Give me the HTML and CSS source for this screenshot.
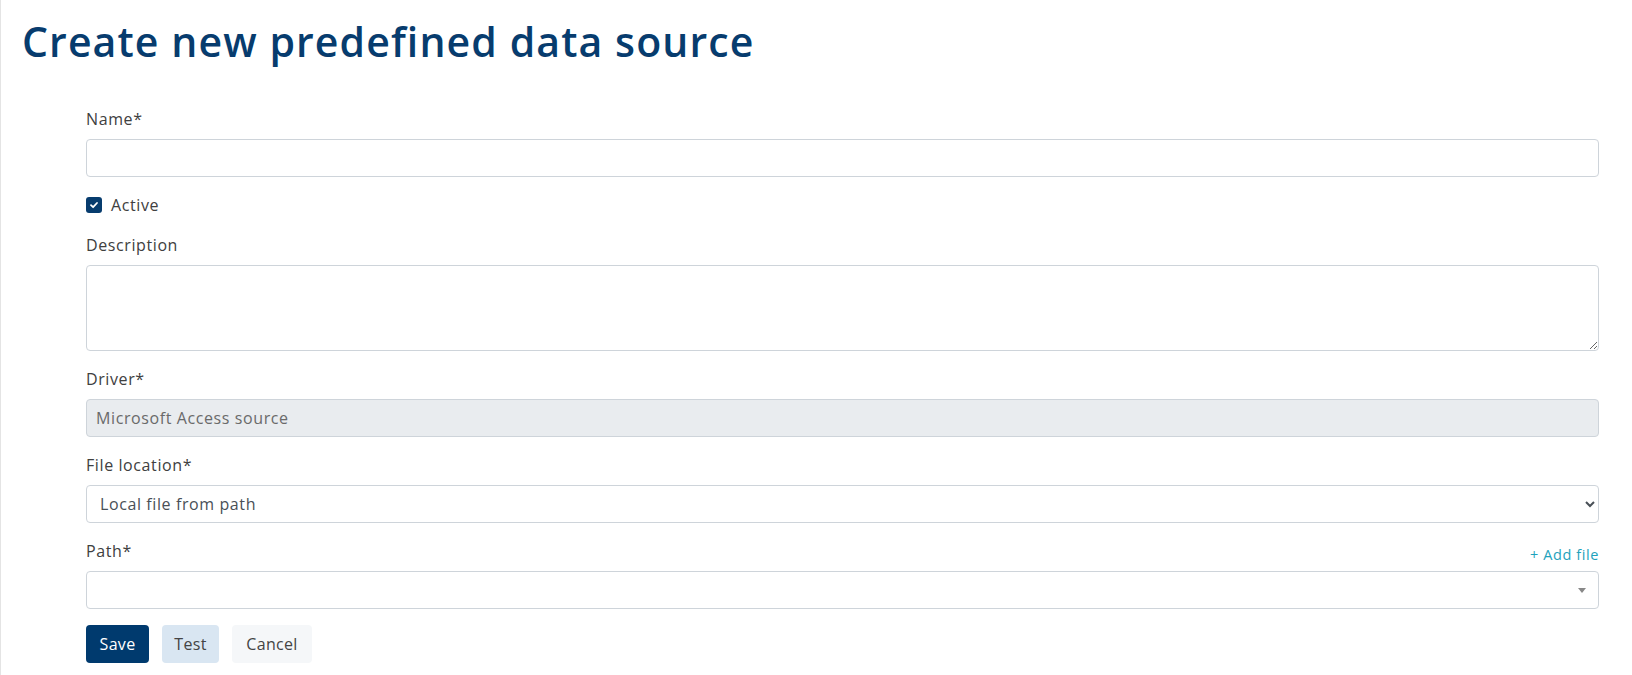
FILE: index.html
```html
<!DOCTYPE html>
<html lang="en">
<head>
<meta charset="utf-8">
<title>Create new predefined data source</title>
<link rel="stylesheet" href="styles.css">
</head>
<body>
<div class="page">
  <h1 class="title">Create new predefined data source</h1>
  <form class="form">
    <div class="group">
      <label class="label">Name*</label>
      <input class="control" type="text">
    </div>
    <div class="check-row">
      <span class="checkbox">
        <svg width="10" height="10" viewBox="0 0 10 10"><path d="M2 5.2 L4.1 7.2 L8 3" fill="none" stroke="#fff" stroke-width="1.8" stroke-linecap="round" stroke-linejoin="round"/></svg>
      </span>
      <span class="check-label">Active</span>
    </div>
    <div class="group">
      <label class="label">Description</label>
      <textarea class="control textarea" rows="3"></textarea>
    </div>
    <div class="group">
      <label class="label">Driver*</label>
      <div class="control disabled">Microsoft Access source</div>
    </div>
    <div class="group">
      <label class="label">File location*</label>
      <select class="control select">
        <option>Local file from path</option>
      </select>
    </div>
    <div class="group">
      <div class="label-row">
        <label class="label">Path*</label>
        <a class="add-file">+ Add file</a>
      </div>
      <div class="control combo"><span class="combo-arrow"></span></div>
    </div>
    <div class="buttons">
      <button type="button" class="btn btn-save">Save</button>
      <button type="button" class="btn btn-test">Test</button>
      <button type="button" class="btn btn-cancel">Cancel</button>
    </div>
  </form>
</div>
</body>
</html>
```
FILE: styles.css
```css
html, body {
  margin: 0;
  padding: 0;
  background: #fff;
}
body {
  font-family: "Open Sans", "Noto Sans", sans-serif;
  font-size: 16px;
  color: #333;
}
.page {
  border-left: 1px solid #e4e4e4;
  min-height: 675px;
  box-sizing: border-box;
  padding: 17px 33px 0 21px;
}
.title {
  margin: 0;
  font-size: 41px;
  line-height: 48px;
  font-weight: 600;
  color: #073c6e;
  letter-spacing: 1.1px;
}
.form {
  margin-top: 42px;
  margin-left: 64px;
}
.group {
  margin-bottom: 16px;
}
.label {
  display: block;
  line-height: 24px;
  margin-bottom: 8px;
  color: #404040;
  font-size: 16px;
  letter-spacing: 0.6px;
}
.label-row {
  display: flex;
  justify-content: space-between;
  align-items: flex-end;
  height: 24px;
  margin-bottom: 8px;
}
.label-row .label {
  margin-bottom: 0;
}
.add-file {
  font-size: 14.5px;
  line-height: 14px;
  margin-bottom: 1px;
  color: #1ea2bc;
  text-decoration: none;
  letter-spacing: 0.6px;
}
.control {
  display: block;
  box-sizing: border-box;
  width: 100%;
  height: 38px;
  border: 1px solid #ced4da;
  border-radius: 4px;
  padding: 6px 12px;
  font-family: inherit;
  font-size: 16px;
  letter-spacing: 0.6px;
  line-height: 24px;
  color: #495057;
  background: #fff;
  margin: 0;
}
.textarea {
  height: 86px;
  resize: vertical;
}
.disabled {
  background: #e9ecef;
  color: #6a6a6a;
  padding-left: 9px;
}
.select {
  padding-left: 9px;
}
.combo {
  position: relative;
}
.combo-arrow {
  position: absolute;
  right: 12px;
  top: 16px;
  width: 0;
  height: 0;
  border-style: solid;
  border-width: 5px 4px 0 4px;
  border-color: #888 transparent transparent transparent;
}
.check-row {
  display: flex;
  align-items: center;
  height: 24px;
  margin-bottom: 16px;
}
.checkbox {
  display: flex;
  align-items: center;
  justify-content: center;
  width: 16px;
  height: 16px;
  border-radius: 3px;
  background: #073c6e;
  margin-right: 9px;
}
.check-label {
  color: #404040;
  font-size: 16px;
  letter-spacing: 0.6px;
  line-height: 24px;
}
.buttons {
  display: flex;
  gap: 13px;
}
.btn {
  height: 38px;
  border: none;
  border-radius: 4px;
  font-family: inherit;
  font-size: 16px;
  letter-spacing: 0.3px;
  line-height: 24px;
  padding: 0;
  text-align: center;
}
.btn-save {
  width: 63px;
  background: #003a6e;
  color: #fff;
}
.btn-test {
  width: 57px;
  background: #d9e6f2;
  color: #444;
}
.btn-cancel {
  width: 80px;
  background: #f5f7f9;
  color: #444;
}
```
